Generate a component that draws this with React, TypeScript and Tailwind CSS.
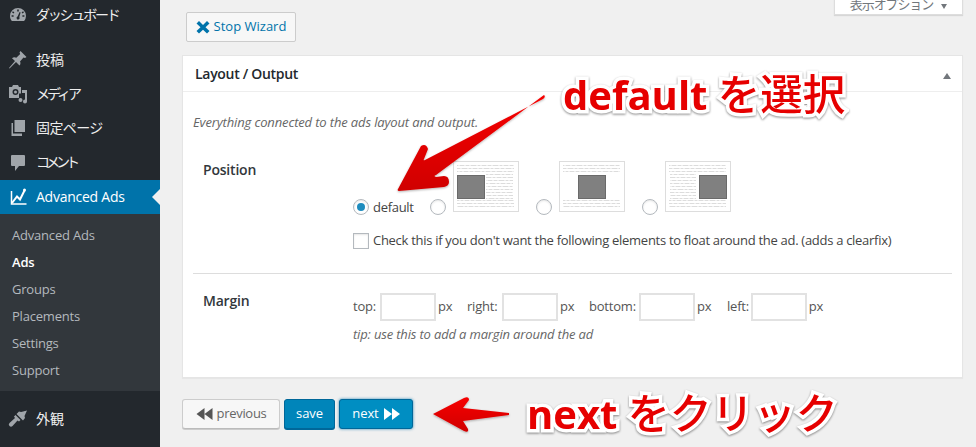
import React from 'react'

const font = '[font-family:"Open_Sans","Noto_Sans_CJK_JP",sans-serif]'

const DashIcon = () => (
  <svg width="20" height="20" viewBox="0 0 20 20" fill="currentColor">
    <path fillRule="evenodd" d="M10 3a8 8 0 0 0-8 8c0 2 .7 3.700 1.900 5h12.200A8 8 0 0 0 18 11a8 8 0 0 0-8-8zM9.200 4.600h1.600v2H9.200zM5 6.200l1.400 1.400-1 1L4 7.200zm10 0 1 1-1.400 1.400-1-1zM3.600 10.200h2v1.600h-2zm10.800 0h2v1.600h-2zM11.600 7l1 .5-1.300 4.600a1.500 1.500 0 1 1-1.700-.5z" />
  </svg>
)

const PinIcon = () => (
  <svg width="20" height="20" viewBox="0 0 20 20" fill="currentColor">
    <path d="M12.500 1 18.500 7 17 8 15.500 7.500 12 11.500C12.800 13 12.500 14.500 11.500 15.500L8 12 1.500 18.500 1 18 7 11 4 8.200C5.200 7 7 6.800 8.300 7.800L12.200 4 11.500 2.500z" />
  </svg>
)

const MediaIcon = () => (
  <svg width="20" height="20" viewBox="0 0 20 20" fill="currentColor">
    <path fillRule="evenodd" d="M1 3h3l1-2h5l1 2h2v6.500H11V14H1zM7.500 5a3 3 0 1 0 0 6 3 3 0 0 0 0-6z" />
    <circle cx="7.500" cy="8" r="1.500" />
    <path d="M14 6h5v11.500a2 2 0 1 1-2-2V9h-1v0h-2zM12.500 14a2 2 0 1 1 0 4 2 2 0 0 1 0-4z" />
  </svg>
)

const PagesIcon = () => (
  <svg width="20" height="20" viewBox="0 0 20 20" fill="currentColor">
    <path d="M6.500 2H17v12H6.500z" />
    <path d="M3.500 5H5v10.500h9V18H3.500z" />
  </svg>
)

const CommentIcon = () => (
  <svg width="20" height="20" viewBox="0 0 20 20" fill="currentColor">
    <path d="M4 3h12a1 1 0 0 1 1 1v9a1 1 0 0 1-1 1h-5l-4 5v-5H4a1 1 0 0 1-1-1V4a1 1 0 0 1 1-1z" />
  </svg>
)

const ChartIcon = () => (
  <svg width="20" height="20" viewBox="0 0 20 20" fill="none" stroke="currentColor">
    <path d="M3.500 4v13H18.500" strokeWidth="1.500" />
    <path d="M4 16 9 9.500l3 3L16.500 3.500" strokeWidth="2" />
    <circle cx="16.500" cy="3" r="1.500" fill="currentColor" stroke="none" />
  </svg>
)

const BrushIcon = () => (
  <svg width="20" height="20" viewBox="0 0 20 20" fill="currentColor">
    <path d="M19 1.500 13 3l-2-.5-2.500 2.500 6.500 6.500L17 9l-.5-2zM7.500 6 6 7.500l1 1.500-5.500 5a2 2 0 0 0 3 3l5-5.500 1.500 1 1.500-1.500z" />
  </svg>
)

const MenuItem = ({ icon, label, className = '', labelClass = '' }: { icon: React.ReactNode; label: string; className?: string; labelClass?: string }) => (
  <div className={`flex h-[34px] items-center pl-[8px] text-[14px] text-[#eee] ${className}`}>
    <span className="w-[28px] text-[#a0a5aa]">{icon}</span>
    <span className={`pb-[2px] ${labelClass}`}>{label}</span>
  </div>
)

const Sidebar = () => (
  <aside className="-mt-[2px] w-[160px] shrink-0 bg-[#23282d]">
    <MenuItem icon={<DashIcon />} label="ダッシュボード" className="mb-[11px]" labelClass="tracking-[-2.200px]" />
    <MenuItem icon={<PinIcon />} label="投稿" />
    <MenuItem icon={<MediaIcon />} label="メディア" labelClass="tracking-[-3px]" />
    <MenuItem icon={<PagesIcon />} label="固定ページ" labelClass="tracking-[-0.600px]" />
    <MenuItem icon={<CommentIcon />} label="コメント" className="mb-[1px]" labelClass="tracking-[-4px]" />
    <div className="relative flex h-[34px] items-center bg-[#0073aa] pl-[8px] text-[14px] tracking-[-0.250px] text-white">
      <span className="w-[28px]"><ChartIcon /></span>
      <span className="pb-[2px]">Advanced Ads</span>
      <span className="absolute right-0 top-[9px] border-y-[8px] border-r-[8px] border-y-transparent border-r-[#f1f1f1]" />
    </div>
    <div className="flex flex-col bg-[#32373c] pb-[7px] pl-[12px] pt-[8px] text-[13px] leading-[27px] tracking-[-0.200px] text-[#b4b9be]">
      <span>Advanced Ads</span>
      <span className="font-semibold text-white">Ads</span>
      <span>Groups</span>
      <span>Placements</span>
      <span>Settings</span>
      <span>Support</span>
    </div>
    <MenuItem icon={<BrushIcon />} label="外観" className="mt-[11px]" />
  </aside>
)

const TextLine = ({ x1, x2, y }: { x1: number; x2: number; y: number }) => (
  <line x1={x1} x2={x2} y1={y} y2={y} stroke="#dcdcdc" strokeDasharray="4 1 6 1 3 1 5 1" strokeDashoffset={y * 3} />
)

const Thumb = ({ side }: { side: 'left' | 'center' | 'right' }) => {
  const boxX = side === 'left' ? 4 : side === 'center' ? 19 : 34
  const rows = [4.5, 7.5, 10.5, 39.5, 42.5, 45.5]
  const sideRows = [13.5, 16.5, 19.5, 22.5, 25.5, 28.5, 31.5, 34.5, 37.5]
  return (
    <svg width="66" height="51" viewBox="0 0 66 51" className="block shrink-0">
      <rect x=".5" y=".5" width="65" height="50" fill="#fff" stroke="#ddd" />
      {rows.map((y) => (
        <TextLine key={y} x1={4} x2={61} y={y} />
      ))}
      {side !== 'center' &&
        sideRows.map((y) =>
          side === 'left' ? <TextLine key={y} x1={33} x2={60} y={y} /> : <TextLine key={y} x1={5} x2={31} y={y} />,
        )}
      <rect x={boxX + 0.5} y="14.500" width="27" height="23" fill="#808080" stroke="#6a6a6a" />
    </svg>
  )
}

const Radio = ({ checked = false }: { checked?: boolean }) => (
  <span className="flex h-[16px] w-[16px] shrink-0 items-center justify-center rounded-full border border-[#b4b9be] bg-white shadow-[inset_0_1px_2px_rgba(0,0,0,0.1)]">
    {checked && <span className="h-[8px] w-[8px] rounded-full bg-[#1e8cbe]" />}
  </span>
)

const MarginField = ({ label, className, labelClass }: { label: string; className: string; labelClass: string }) => (
  <div className={`flex items-center ${className}`}>
    <span className={labelClass}>{label}</span>
    <span className="h-[28px] w-[56px] shrink-0 border-2 border-[#e2e2e2] bg-white" />
    <span className="ml-[2px]">px</span>
  </div>
)

const Panel = () => (
  <section className="mt-[13px] h-[323px] border border-[#e5e5e5] bg-white shadow-[0_1px_1px_rgba(0,0,0,0.04)]">
    <div className="relative flex h-[36px] items-center border-b border-[#eee] pl-[12px] text-[14px] font-semibold tracking-[-0.300px] text-[#23282d]">
      Layout / Output
      <span className="absolute right-[11px] top-[17px] border-x-[4px] border-b-[6px] border-x-transparent border-b-[#72777c]" />
    </div>
    <div className="px-[10px]">
      <p className="mt-[21px] text-[13px] italic leading-[18px] tracking-[-0.140px] text-[#666]">Everything connected to the ads layout and output.</p>
      <div className="mt-[10px] flex h-[133px] border-b border-[#ddd]">
        <div className="w-[160px] pl-[10px] pt-[18px] text-[14px] font-semibold tracking-[-0.200px] text-[#32373c]">Position</div>
        <div className="pt-[20px] text-[13px] tracking-[-0.290px] text-[#444]">
          <div className="flex h-[54px] items-end">
            <div className="flex items-center">
              <Radio checked />
              <span className="ml-[4px] w-[57px] leading-[16px]">default</span>
            </div>
            <div className="flex items-end gap-[7px]">
              <Radio />
              <span className="mb-[3px]"><Thumb side="left" /></span>
            </div>
            <div className="ml-[17px] flex items-end gap-[7px]">
              <Radio />
              <span className="mb-[3px]"><Thumb side="center" /></span>
            </div>
            <div className="ml-[17px] flex items-end gap-[7px]">
              <Radio />
              <span className="mb-[3px]"><Thumb side="right" /></span>
            </div>
          </div>
          <label className="mt-[18px] flex h-[16px] items-center">
            <span className="h-[16px] w-[16px] border border-[#b4b9be] bg-white shadow-[inset_0_1px_2px_rgba(0,0,0,0.1)]" />
            <span className="ml-[4px]">Check this if you don't want the following elements to float around the ad. (adds a clearfix)</span>
          </label>
        </div>
      </div>
      <div className="flex">
        <div className="w-[160px] pl-[10px] pt-[16px] text-[14px] font-semibold tracking-[-0.200px] text-[#32373c]">Margin</div>
        <div className="pt-[19px] text-[13px] tracking-[-0.200px] text-[#555]">
          <div className="flex items-center">
            <MarginField label="top:" className="w-[114px]" labelClass="w-[27px]" />
            <MarginField label="right:" className="w-[122px]" labelClass="w-[35px]" />
            <MarginField label="bottom:" className="w-[138px]" labelClass="w-[50px]" />
            <MarginField label="left:" className="w-[96px]" labelClass="w-[25px]" />
          </div>
          <p className="mt-[4px] text-[13px] italic leading-[18px] tracking-[-0.160px] text-[#666]">tip: use this to add a margin around the ad</p>
        </div>
      </div>
    </div>
  </section>
)

const annotation = 'absolute whitespace-nowrap text-[40px] leading-none text-[#e60000] [-webkit-text-stroke:7px_white] [paint-order:stroke_fill] [filter:drop-shadow(0_1px_1px_rgba(0,0,0,0.45))]'

const Annotations = () => (
  <>
    <svg className="absolute left-0 top-0" width="976" height="447" viewBox="0 0 976 447">
      <defs>
        <linearGradient id="arrowRed" x1="0" y1="0" x2="0" y2="1">
          <stop offset="0" stopColor="#f60000" />
          <stop offset="1" stopColor="#d00000" />
        </linearGradient>
        <filter id="arrowShadow" x="-10%" y="-10%" width="120%" height="120%">
          <feDropShadow dx="0" dy="1" stdDeviation="1" floodOpacity=".3" />
        </filter>
      </defs>
      <path d="M544 95Q546 97 543 99L425 160Q423 161 424 159L428 149Q426 143 421 146L398 189Q397 191 399 191L444 187Q449 186 449 182Q449 176 444 176L436 177Q433 176 436 175Z" fill="url(#arrowRed)" filter="url(#arrowShadow)" />
      <path d="M433 414 464 398Q469 396 469 400L463 408 509 413V415L463 421 468 429Q469 433 464 431Z" fill="url(#arrowRed)" filter="url(#arrowShadow)" />
    </svg>
    <div className={`${annotation} left-[563px] top-[73px]`}>
      <span className="font-bold">default</span> <span className="text-[42.500px] font-medium">を選択</span>
    </div>
    <div className={`${annotation} left-[527px] top-[392px]`}>
      <span className="font-bold">next</span> <span className="text-[42px] font-medium">をクリック</span>
    </div>
  </>
)

const App = () => {
  return (
    <div className={`relative flex h-[447px] w-[976px] overflow-hidden bg-[#f0f0f0] ${font}`}>
      <Sidebar />
      <main className="ml-[22px] w-[781px]">
        <div className="flex h-[42px] items-end justify-between">
          <button className="ml-[4px] flex h-[30px] w-[110px] items-center justify-center gap-[4px] rounded-[2px] border border-[#ccc] bg-[#f7f7f7] text-[13px] text-[#0073aa]">
            <svg width="14" height="14" viewBox="0 0 14 14" fill="currentColor">
              <path d="M3 1 7 5l4-4 2.500 2.500L9.500 7.300l4 3.700-2.500 2.500-4-3.700L3 13.500.5 11l4-3.700-4-3.800z" />
            </svg>
            Stop Wizard
          </button>
          <div className="-mt-[15px] flex h-[30px] w-[129px] items-end justify-center gap-[8px] self-start border border-t-0 border-[#ddd] bg-white pb-[3px] text-[13px] leading-none tracking-[-1.100px] text-[#72777c] shadow-[0_1px_1px_rgba(0,0,0,0.1)]">
            表示オプション <span className="mb-[2px] border-x-[3px] border-t-[5px] border-x-transparent border-t-[#72777c]" />
          </div>
        </div>
        <Panel />
        <div className="mt-[21px] flex items-center gap-[4px] text-[13px] tracking-[-0.100px]">
          <button className="flex h-[30px] w-[98px] items-center justify-center gap-[4px] rounded-[3px] border border-[#ccc] border-b-[#bbb] bg-[#f7f7f7] tracking-[-0.300px] text-[#666] shadow-[0_1px_0_#ccc]">
            <svg width="17" height="12" viewBox="0 0 16 12" fill="#555"><path d="M8 0v12L0 6zM16 0v12L8 6z" /></svg>
            previous
          </button>
          <button className="h-[30px] w-[51px] rounded-[3px] border border-[#006799] bg-[#0085ba] text-white shadow-[0_1px_0_#006799]">save</button>
          <button className="flex h-[30px] w-[74px] items-center justify-center gap-[5px] rounded-[3px] border border-[#006799] bg-[#008ec2] text-white shadow-[0_0_3px_rgba(0,115,170,0.8)]">
            next
            <svg width="16" height="12" viewBox="0 0 16 12" fill="#fff"><path d="M0 0v12l8-6zM8 0v12l8-6z" /></svg>
          </button>
        </div>
      </main>
      <Annotations />
    </div>
  )
}

export default App
